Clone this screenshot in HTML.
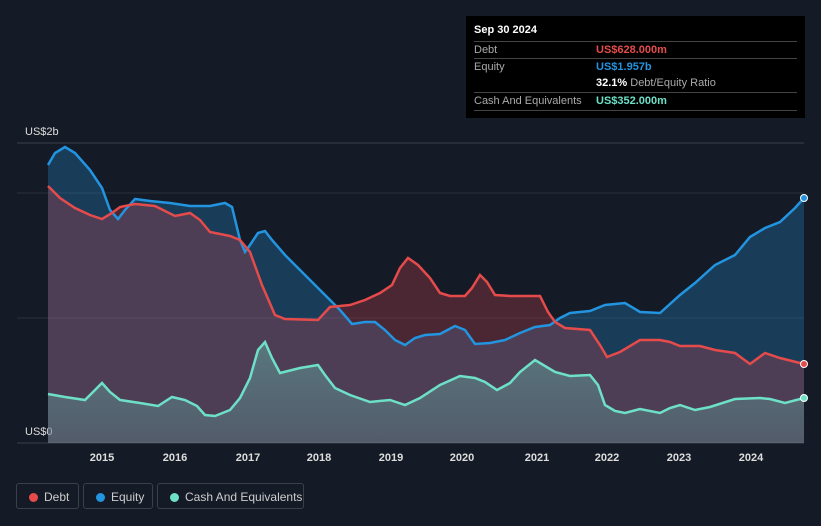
<!DOCTYPE html>
<html><head><meta charset="utf-8"><style>
body{margin:0;width:821px;height:526px;background:#151b26;font-family:"Liberation Sans",sans-serif;overflow:hidden;position:relative}
.tt{position:absolute;left:466px;top:16px;width:339px;height:102px;background:#000;color:#fff;font-size:11px}
.tt .r{position:absolute;left:8px;right:8px;border-top:1px solid #444;height:17px;line-height:17px;color:#aaa}
.tt .r span{position:absolute;left:122px;font-weight:bold}
.lg{position:absolute;top:483px;height:26px;border:1px solid #3a404b;border-radius:3px;color:#ccc;font-size:12px;line-height:26px;box-sizing:border-box}
.lg i{position:absolute;left:12px;top:9px;width:9px;height:9px;border-radius:50%}
.lg b{font-weight:normal;position:absolute;left:27px}
</style></head><body>
<svg width="821" height="526" style="position:absolute;left:0;top:0">
<defs><linearGradient id="cg" x1="0" y1="0" x2="0" y2="1"><stop offset="0" stop-color="rgba(110,224,200,0.35)"/><stop offset="1" stop-color="rgba(110,224,200,0.18)"/></linearGradient></defs>
<line x1="17" y1="143" x2="804" y2="143" stroke="#3a404b"/>
<line x1="17" y1="193" x2="804" y2="193" stroke="#2a303b"/>
<line x1="17" y1="318" x2="804" y2="318" stroke="#2a303b"/>
<line x1="17" y1="443" x2="804" y2="443" stroke="#3a404b"/>
<text x="25" y="135" fill="#ddd" font-size="11">US$2b</text>
<text x="25" y="435" fill="#ddd" font-size="11">US$0</text>
<g fill="#ddd" font-size="11" font-weight="bold" text-anchor="middle">
<text x="102" y="461">2015</text><text x="175" y="461">2016</text><text x="248" y="461">2017</text><text x="319" y="461">2018</text><text x="391" y="461">2019</text><text x="462" y="461">2020</text><text x="537" y="461">2021</text><text x="607" y="461">2022</text><text x="679" y="461">2023</text><text x="751" y="461">2024</text>
</g>
<polygon fill="rgba(35,148,223,0.28)" points="48,443 48,165 55,153 65,147 75,153 90,170 102,188 110,210 118,219 125,210 135,199 150,201 170,203 190,206 210,206 225,203 232,207 240,240 245,252 250,245 258,233 265,231 272,240 285,255 300,270 320,290 340,310 352,324 365,322 375,322 385,330 395,340 405,345 415,338 425,335 440,334 455,326 465,330 475,344 490,343 505,340 520,333 535,327 550,325 560,318 570,313 590,311 605,305 625,303 640,312 660,313 680,295 695,283 715,265 735,255 750,237 765,228 780,222 795,208 804,198 804,443"/>
<polygon fill="rgba(200,70,80,0.3)" points="48,443 48,186 60,198 75,208 90,215 102,219 112,213 120,207 135,204 155,206 175,216 190,213 200,220 210,232 230,236 240,240 250,252 262,285 275,315 285,319 318,320 330,307 350,305 365,300 380,293 392,285 400,268 408,258 418,265 430,278 440,293 450,296 465,296 472,288 480,275 487,282 495,295 510,296 540,296 548,312 555,322 565,328 590,330 600,345 607,357 620,352 640,340 660,340 670,342 680,346 700,346 715,350 735,353 750,364 765,353 780,358 804,364 804,443"/>
<polygon fill="url(#cg)" points="48,443 48,394 65,397 85,400 95,390 102,383 110,392 120,400 140,403 158,406 172,397 185,400 197,406 205,415 215,416 230,410 240,398 250,378 258,350 265,342 272,358 280,373 300,368 318,365 325,375 335,388 350,395 370,402 390,400 405,405 420,398 440,385 460,376 475,378 485,382 497,390 510,383 520,372 535,360 545,366 555,372 570,376 590,375 598,385 605,405 615,411 625,413 640,409 660,413 670,408 680,405 695,410 710,407 735,399 760,398 770,399 785,403 804,398 804,443"/>
<polyline fill="none" stroke="#2394df" stroke-width="2.5" points="48,165 55,153 65,147 75,153 90,170 102,188 110,210 118,219 125,210 135,199 150,201 170,203 190,206 210,206 225,203 232,207 240,240 245,252 250,245 258,233 265,231 272,240 285,255 300,270 320,290 340,310 352,324 365,322 375,322 385,330 395,340 405,345 415,338 425,335 440,334 455,326 465,330 475,344 490,343 505,340 520,333 535,327 550,325 560,318 570,313 590,311 605,305 625,303 640,312 660,313 680,295 695,283 715,265 735,255 750,237 765,228 780,222 795,208 804,198"/>
<polyline fill="none" stroke="#e64b4b" stroke-width="2.5" points="48,186 60,198 75,208 90,215 102,219 112,213 120,207 135,204 155,206 175,216 190,213 200,220 210,232 230,236 240,240 250,252 262,285 275,315 285,319 318,320 330,307 350,305 365,300 380,293 392,285 400,268 408,258 418,265 430,278 440,293 450,296 465,296 472,288 480,275 487,282 495,295 510,296 540,296 548,312 555,322 565,328 590,330 600,345 607,357 620,352 640,340 660,340 670,342 680,346 700,346 715,350 735,353 750,364 765,353 780,358 804,364"/>
<polyline fill="none" stroke="#6ee0c8" stroke-width="2.5" points="48,394 65,397 85,400 95,390 102,383 110,392 120,400 140,403 158,406 172,397 185,400 197,406 205,415 215,416 230,410 240,398 250,378 258,350 265,342 272,358 280,373 300,368 318,365 325,375 335,388 350,395 370,402 390,400 405,405 420,398 440,385 460,376 475,378 485,382 497,390 510,383 520,372 535,360 545,366 555,372 570,376 590,375 598,385 605,405 615,411 625,413 640,409 660,413 670,408 680,405 695,410 710,407 735,399 760,398 770,399 785,403 804,398"/>
<circle cx="804" cy="198" r="3.5" fill="#2394df" stroke="#fff" stroke-width="1"/>
<circle cx="804" cy="364" r="3.5" fill="#e64b4b" stroke="#fff" stroke-width="1"/>
<circle cx="804" cy="398" r="3.5" fill="#6ee0c8" stroke="#fff" stroke-width="1"/>
</svg>
<div class="tt">
<div style="position:absolute;left:8px;top:8px;font-size:11px;font-weight:bold">Sep 30 2024</div>
<div class="r" style="top:25px">Debt<span style="color:#e64b4b">US$628.000m</span></div>
<div class="r" style="top:42px">Equity<span style="color:#2394df">US$1.957b</span></div>
<div class="r" style="top:59px;border-top:none"><span style="color:#fff">32.1% <em style="font-style:normal;font-weight:normal;color:#aaa">Debt/Equity Ratio</em></span></div>
<div class="r" style="top:76px">Cash And Equivalents<span style="color:#6ee0c8">US$352.000m</span></div>
<div class="r" style="top:94px;height:0"></div>
</div>
<div class="lg" style="left:16px;width:63px"><i style="background:#e64b4b"></i><b>Debt</b></div>
<div class="lg" style="left:83px;width:70px"><i style="background:#2394df"></i><b>Equity</b></div>
<div class="lg" style="left:157px;width:147px"><i style="background:#6ee0c8"></i><b>Cash And Equivalents</b></div>
</body></html>
